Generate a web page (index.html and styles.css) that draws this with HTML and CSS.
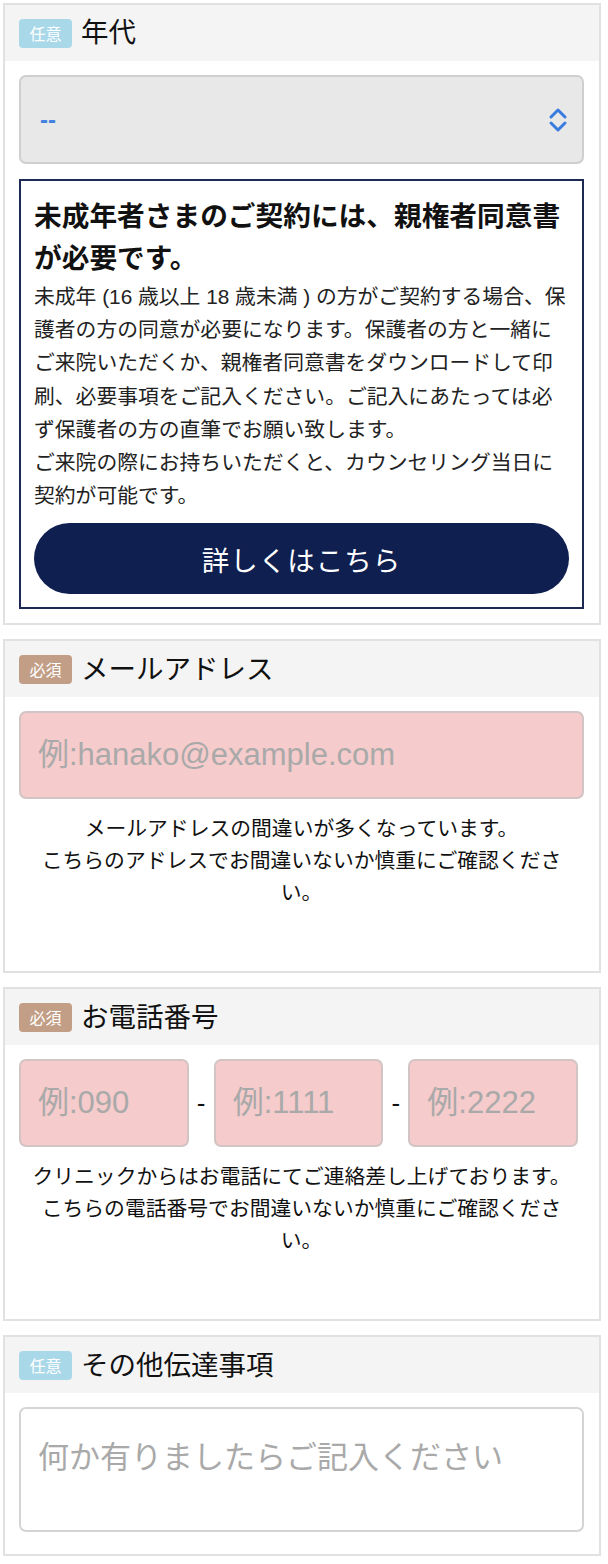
FILE: index.html
```html
<!DOCTYPE html>
<html lang="ja">
<head>
<meta charset="utf-8">
<link rel="stylesheet" href="styles.css">
</head>
<body>
<div class="page">
  <section class="card">
    <div class="card-head"><span class="badge badge-opt">任意</span><span class="title">年代</span></div>
    <div class="card-body">
      <div class="select-wrap">
        <select class="select"><option>--</option></select>
        <svg class="chev" viewBox="0 0 20 26" width="20" height="26"><path d="M3 10 L10 3 L17 10" fill="none" stroke="#3a7be0" stroke-width="3" stroke-linecap="round" stroke-linejoin="round"/><path d="M3 16 L10 23 L17 16" fill="none" stroke="#3a7be0" stroke-width="3" stroke-linecap="round" stroke-linejoin="round"/></svg>
      </div>
      <div class="notice">
        <h2 class="notice-title">未成年者さまのご契約には、親権者同意書が必要です。</h2>
        <p class="notice-text">未成年 (16 歳以上 18 歳未満 ) の方がご契約する場合、保護者の方の同意が必要になります。保護者の方と一緒にご来院いただくか、親権者同意書をダウンロードして印刷、必要事項をご記入ください。ご記入にあたっては必ず保護者の方の直筆でお願い致します。<br>ご来院の際にお持ちいただくと、カウンセリング当日に契約が可能です。</p>
        <a class="btn">詳しくはこちら</a>
      </div>
    </div>
  </section>

  <section class="card">
    <div class="card-head"><span class="badge badge-req">必須</span><span class="title">メールアドレス</span></div>
    <div class="card-body body-note">
      <input class="field field-err" type="text" placeholder="例:hanako@example.com">
      <p class="note">メールアドレスの間違いが多くなっています。<br>こちらのアドレスでお間違いないか慎重にご確認ください。</p>
    </div>
  </section>

  <section class="card">
    <div class="card-head"><span class="badge badge-req">必須</span><span class="title">お電話番号</span></div>
    <div class="card-body body-note">
      <div class="tel-row">
        <input class="field field-err" type="text" placeholder="例:090">
        <span class="dash">-</span>
        <input class="field field-err" type="text" placeholder="例:1111">
        <span class="dash">-</span>
        <input class="field field-err" type="text" placeholder="例:2222">
      </div>
      <p class="note">クリニックからはお電話にてご連絡差し上げております。<br>こちらの電話番号でお間違いないか慎重にご確認ください。</p>
    </div>
  </section>

  <section class="card">
    <div class="card-head"><span class="badge badge-opt">任意</span><span class="title">その他伝達事項</span></div>
    <div class="card-body body-last">
      <textarea class="area" placeholder="何か有りましたらご記入ください"></textarea>
    </div>
  </section>
</div>
</body>
</html>
```

FILE: styles.css
```css
* { box-sizing: border-box; }
html, body { margin: 0; padding: 0; background: #fff; }
body {
  font-family: "Liberation Sans", "Noto Sans CJK JP", sans-serif;
  color: #111;
}
.page {
  display: flex;
  flex-direction: column;
  gap: 14px;
  padding: 3px 7px 0 3px;
}
.card {
  border: 2px solid #e1e1e1;
  background: #fff;
}
.card-head {
  height: 56px;
  background: #f4f4f4;
  display: flex;
  align-items: center;
  padding-left: 14px;
  gap: 9px;
}
.badge {
  width: 53px;
  height: 29px;
  border-radius: 4px;
  color: #fff;
  font-size: 16px;
  display: flex;
  align-items: center;
  justify-content: center;
}
.badge-opt { background: #a9d8e8; }
.badge-req { background: #c29e86; }
.title {
  font-size: 27.5px;
  line-height: 1;
  color: #111;
}
.card-body {
  padding: 14px 15px 14px 14px;
}
.body-note { padding-bottom: 62px; }
.body-last { padding-bottom: 22px; }

.select-wrap { position: relative; }
.select {
  -webkit-appearance: none;
  appearance: none;
  display: block;
  width: 100%;
  height: 89px;
  background: #e8e8e8;
  border: 2px solid #cfcfcf;
  border-radius: 7px;
  font-family: inherit;
  font-size: 24px;
  font-weight: bold;
  color: #3e7fe0;
  padding: 0 0 0 19px;
}
.chev {
  position: absolute;
  right: 16px;
  top: 32px;
}
.notice {
  margin-top: 15px;
  border: 2px solid #1c2a55;
  padding: 15px 13px 13px;
}
.notice-title {
  margin: 0;
  font-size: 27.7px;
  line-height: 42px;
  font-weight: bold;
}
.notice-text {
  margin: 0;
  font-size: 20.8px;
  line-height: 33.2px;
  color: #222;
}
.btn {
  display: flex;
  align-items: center;
  justify-content: center;
  margin-top: 11px;
  height: 71px;
  border-radius: 36px;
  background: #0e1f50;
  color: #fff;
  font-size: 27.5px;
  letter-spacing: 1px;
}
.field {
  display: block;
  width: 100%;
  height: 88px;
  border: 2px solid #d2c4c4;
  border-radius: 7px;
  font-family: inherit;
  font-size: 31px;
  padding: 0 0 0 17px;
  color: #333;
}
.field-err { background: #f5cbcb; }
.field::placeholder, .area::placeholder { color: #a9a9a9; }
.note {
  margin: 14px 8px 0;
  text-align: center;
  font-size: 20.8px;
  line-height: 32px;
  color: #111;
}
.tel-row {
  display: flex;
  align-items: center;
  padding-right: 6px;
}
.tel-row .field { flex: 1; min-width: 0; }
.dash {
  width: 25px;
  text-align: center;
  font-size: 26px;
}
.area {
  display: block;
  width: 100%;
  height: 125px;
  border: 2px solid #d4d4d4;
  border-radius: 7px;
  font-family: inherit;
  font-size: 31px;
  padding: 23px 17px;
  resize: none;
  background: #fff;
}
```
